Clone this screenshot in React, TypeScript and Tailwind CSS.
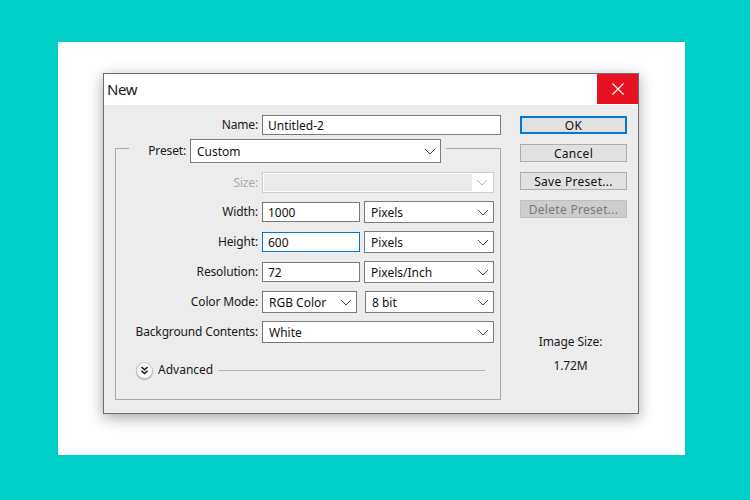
import React from "react";

const font = "font-['Noto_Sans','Open_Sans',sans-serif]";

function Chevron({ color = "#444" }: { color?: string }) {
  return (
    <svg width="12" height="7" viewBox="0 0 12 7" fill="none" className="shrink-0">
      <path d="M1 1L6 6L11 1" stroke={color} strokeWidth="1" />
    </svg>
  );
}

function Label({ children, disabled, width = "w-[146px]" }: { children: React.ReactNode; disabled?: boolean; width?: string }) {
  return (
    <div className={`${width} shrink-0 pr-[4px] text-right text-[12px] tracking-[-0.15px] ${disabled ? "text-[#a9a9a9]" : "text-[#1a1a1a]"}`}>
      {children}
    </div>
  );
}

function Input({ value, width, focus }: { value: string; width: string; focus?: boolean }) {
  return (
    <div className={`${width} flex h-[20px] items-center border bg-white pl-[5px] pt-[1px] text-[12px] text-[#111] ${focus ? "border-[#0078d7]" : "border-[#7a7a7a]"}`}>
      {value}
    </div>
  );
}

function Select({ value, width, ml }: { value: string; width: string; ml?: string }) {
  return (
    <div className={`${width} ${ml ?? ""} flex h-[22px] items-center justify-between border border-[#7a7a7a] bg-white pl-[6px] pr-[4px] text-[12px] text-[#111]`}>
      <span className="pt-[1px]">{value}</span>
      <Chevron />
    </div>
  );
}

function Row({ label, children }: { label: string; children: React.ReactNode }) {
  return (
    <div className="flex h-[22px] items-center">
      <Label>{label}</Label>
      {children}
    </div>
  );
}

function Button({ label, primary, disabled }: { label: string; primary?: boolean; disabled?: boolean }) {
  const border = primary ? "border-2 border-[#0078d7] bg-[#e1e1e1] text-[#111]" : disabled ? "border border-[#bfbfbf] bg-[#cccccc] text-[#7c7c7c]" : "border border-[#adadad] bg-[#e1e1e1] text-[#111]";
  return <div className={`flex h-[18px] w-[107px] items-center justify-center pt-[1px] text-[12px] tracking-[0.3px] ${border}`}>{label}</div>;
}

export default function App() {
  return (
    <div className={`h-[500px] w-[750px] overflow-hidden bg-[#00cfc8] pl-[58px] pt-[42px] ${font}`}>
      <div className="h-[413px] w-[627px] bg-white pl-[45px] pt-[31px]">
        <div className="h-[341px] w-[536px] border border-[#6e6e6e] bg-[#ececec] shadow-[0_4px_14px_rgba(0,0,0,0.35)]">
          <div className="flex h-[31px] items-start justify-between bg-white">
            <div className="pl-[3px] pt-[5px] font-['Open_Sans',sans-serif] text-[15px] leading-[20px] tracking-[-0.4px] text-[#1a1a1a]">New</div>
            <div className="flex h-[30px] w-[41px] items-center justify-center bg-[#e81123]">
              <svg width="14" height="14" viewBox="0 0 14 14" fill="none">
                <path d="M1.5 1.5L12.5 12.5M12.5 1.5L1.5 12.5" stroke="#fff" strokeWidth="1.1" />
              </svg>
            </div>
          </div>
          <div className="flex pl-[11px] pt-[10px]">
            <div className="w-[386px]">
              <div className="flex h-[20px] items-center">
                <Label width="w-[147px]">Name:</Label>
                <Input value="Untitled-2" width="w-[241px]" />
              </div>
              <fieldset className="mt-[12px] h-[253px] w-[386px] border border-[#a8a8a8] pt-[23px]">
                <legend className="ml-[13px] h-[2px] w-[317px]">
                  <div className="mt-[-8px] flex h-[24px] items-center">
                    <div className="w-[61px] pr-[4px] text-right text-[12px] tracking-[-0.15px] text-[#1a1a1a]">Preset:</div>
                    <div className="flex h-[24px] w-[251px] items-center justify-between border border-[#7a7a7a] bg-white pl-[6px] pr-[4px] text-[12px] text-[#111]">
                      <span className="pt-[1px]">Custom</span>
                      <Chevron />
                    </div>
                  </div>
                </legend>
                <div className="flex flex-col gap-[8px]">
                  <div className="flex h-[21px] items-center">
                    <Label disabled>Size:</Label>
                    <div className="flex h-[21px] w-[232px] items-center border border-[#cdcdcd] bg-white p-px">
                      <div className="h-full w-[208px] bg-[#ebebeb]" />
                      <div className="flex flex-1 justify-center"><Chevron color="#b5b5b5" /></div>
                    </div>
                  </div>
                  <Row label="Width:">
                    <Input value="1000" width="w-[98px]" />
                    <Select value="Pixels" width="w-[130px]" ml="ml-[4px]" />
                  </Row>
                  <Row label="Height:">
                    <Input value="600" width="w-[98px]" focus />
                    <Select value="Pixels" width="w-[130px]" ml="ml-[4px]" />
                  </Row>
                  <Row label="Resolution:">
                    <Input value="72" width="w-[98px]" />
                    <Select value="Pixels/Inch" width="w-[130px]" ml="ml-[4px]" />
                  </Row>
                  <Row label="Color Mode:">
                    <Select value="RGB Color" width="w-[95px]" />
                    <Select value="8 bit" width="w-[129px]" ml="ml-[8px]" />
                  </Row>
                  <Row label="Background Contents:">
                    <Select value="White" width="w-[232px]" />
                  </Row>
                </div>
                <div className="mt-[18px] flex h-[18px] items-center pl-[20px]">
                  <div className="flex h-[17px] w-[17px] items-center justify-center rounded-full border border-[#c4c4c4] bg-[#f8f8f8] shadow-[0_1px_1px_rgba(0,0,0,0.25)]">
                    <svg width="9" height="9" viewBox="0 0 9 9" fill="none">
                      <path d="M1.5 1L4.5 3.8L7.5 1M1.5 4.8L4.5 7.6L7.5 4.8" stroke="#111" strokeWidth="1.3" />
                    </svg>
                  </div>
                  <span className="ml-[5px] text-[12px] text-[#1a1a1a]">Advanced</span>
                  <div className="ml-[5px] h-px w-[267px] bg-[#b4b4b4]" />
                </div>
              </fieldset>
            </div>
            <div className="ml-[19px] flex w-[107px] flex-col pt-[1px]">
              <div className="flex flex-col gap-[10px]">
                <Button label="OK" primary />
                <Button label="Cancel" />
                <Button label="Save Preset..." />
                <Button label="Delete Preset..." disabled />
              </div>
              <div className="mt-[116px] pr-[6px] text-center text-[12px] leading-[16px] tracking-[-0.1px] text-[#1a1a1a]">Image Size:</div>
              <div className="mt-[8px] pr-[6px] text-center text-[12px] leading-[16px] tracking-[-0.1px] text-[#1a1a1a]">1.72M</div>
            </div>
          </div>
        </div>
      </div>
    </div>
  );
}
